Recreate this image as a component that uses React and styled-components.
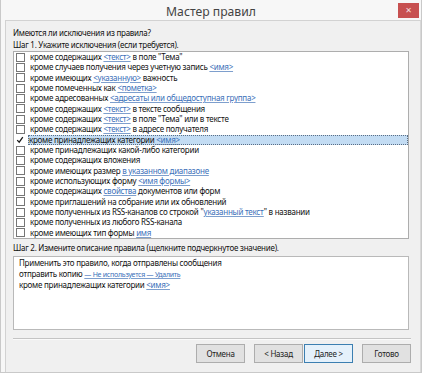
import React from 'react'
import styled, { createGlobalStyle } from 'styled-components'

const Global = createGlobalStyle`
    html, body {
        margin: 0;
        padding: 0;
        background: #ffffff;
    }
    body {
        font-family: "Noto Sans", "Open Sans", sans-serif;
    }
`

const conditions = [
    ['кроме содержащих ', { link: '<текст>' }, ' в поле "Тема"'],
    ['кроме случаев получения через учетную запись ', { link: '<имя>' }],
    ['кроме имеющих ', { link: '<указанную>' }, ' важность'],
    ['кроме помеченных как ', { link: '<пометка>' }],
    ['кроме адресованных ', { link: '<адресаты или общедоступная группа>' }],
    ['кроме содержащих ', { link: '<текст>' }, ' в тексте сообщения'],
    ['кроме содержащих ', { link: '<текст>' }, ' в поле "Тема" или в тексте'],
    ['кроме содержащих ', { link: '<текст>' }, ' в адресе получателя'],
    ['кроме принадлежащих категории ', { link: '<имя>' }],
    ['кроме принадлежащих какой-либо категории'],
    ['кроме содержащих вложения'],
    ['кроме имеющих размер ', { link: 'в указанном диапазоне' }],
    ['кроме использующих форму ', { link: '<имя формы>' }],
    ['кроме содержащих ', { link: 'свойства' }, ' документов или форм'],
    ['кроме приглашений на собрание или их обновлений'],
    ['кроме полученных из RSS-каналов со строкой "', { link: 'указанный текст' }, '" в названии'],
    ['кроме полученных из любого RSS-канала'],
    ['кроме имеющих тип формы ', { link: 'имя' }],
]

const SELECTED = 8

function Parts({ parts }) {
    return parts.map((p, i) =>
        typeof p === 'string' ? <span key={i}>{p}</span> : <Link key={i}>{p.link}</Link>
    )
}

export default function App() {
    return (
        <>
            <Global />
            <Window>
                <TitleBar>
                    <span />
                    <Title>Мастер правил</Title>
                    <CloseButton>✕</CloseButton>
                </TitleBar>
                <Body>
                    <Label>Имеются ли исключения из правила?</Label>
                    <Label>Шаг 1. Укажите исключения (если требуется).</Label>
                    <ListBox>
                        {conditions.map((parts, i) => (
                            <Row key={i}>
                                {i === SELECTED ? (
                                    <CheckMark viewBox="0 0 10 10">
                                        <path d="M1.5 5.2 L4 7.8 L8.5 1.5" fill="none" stroke="#1a1a1a" strokeWidth="1.6" />
                                    </CheckMark>
                                ) : (
                                    <CheckBox />
                                )}
                                <RowText $selected={i === SELECTED}>
                                    <Parts parts={parts} />
                                </RowText>
                            </Row>
                        ))}
                    </ListBox>
                    <Label $top={3}>Шаг 2. Измените описание правила (щелкните подчеркнутое значение).</Label>
                    <Description>
                        <DescLine>Применить это правило, когда отправлены сообщения</DescLine>
                        <DescLine>отправить копию <SmallLink>— Не используется — Удалить</SmallLink></DescLine>
                        <DescLine>кроме принадлежащих категории <Link>&lt;имя&gt;</Link></DescLine>
                    </Description>
                    <Separator />
                    <Buttons>
                        <Button>Отмена</Button>
                        <Pair>
                            <Button>&lt; Назад</Button>
                            <Button $focused>Далее &gt;</Button>
                        </Pair>
                        <Button>Готово</Button>
                    </Buttons>
                </Body>
            </Window>
        </>
    )
}

const Window = styled.div`
    width: 422px;
    height: 373px;
    box-sizing: border-box;
    border: 1px solid #c9c9c9;
    border-top: none;
    background: #f7f7f7;
    display: flex;
    flex-direction: column;
`

const TitleBar = styled.div`
    height: 20px;
    display: grid;
    grid-template-columns: 1fr auto 1fr;
    align-items: start;
`

const Title = styled.div`
    font-family: "Noto Sans", sans-serif;
    font-size: 12.2px;
    color: #444;
    line-height: 24px;
`

const CloseButton = styled.div`
    justify-self: end;
    margin: 3px 2px 0 0;
    width: 21px;
    height: 15px;
    background: #c75050;
    color: #f4dede;
    font-size: 8px;
    line-height: 15px;
    text-align: center;
    font-family: "DejaVu Sans", sans-serif;
`

const Body = styled.div`
    flex: 1;
    margin: 0 0 0 4px;
    border: 1px solid #d2d2d2;
    border-right-color: #d8d8d8;
    border-bottom: none;
    background: #f0f0f0;
    padding: 6px 11px 0 7px;
    display: flex;
    flex-direction: column;
    font-size: 8px;
    letter-spacing: -0.25px;
    color: #111;
`

const Label = styled.div`
    height: 12px;
    line-height: 12px;
    margin-top: ${p => p.$top || 0}px;
    white-space: nowrap;
`

const ListBox = styled.div`
    height: 188px;
    box-sizing: border-box;
    border: 1px solid #adadad;
    background: #ffffff;
    display: flex;
    flex-direction: column;
`

const Row = styled.div`
    height: 10.33px;
    display: flex;
    align-items: center;
    white-space: nowrap;
    line-height: 10px;
`

const CheckBox = styled.span`
    flex: none;
    width: 7px;
    height: 7px;
    margin: 0 4px 0 2px;
    border: 1px solid #767676;
    background: #fff;
`

const CheckMark = styled.svg`
    flex: none;
    width: 8px;
    height: 8px;
    margin: 0 4px 0 2px;
`

const RowText = styled.div`
    flex: 1;
    height: 10.33px;
    line-height: 10.33px;
    padding-left: 1px;
    box-sizing: border-box;
    ${p => p.$selected && `
        background: #c3dcf3;
        outline: 1px dotted #5a6e85;
        outline-offset: -1px;
    `}
`

const Link = styled.span`
    color: #3b70b9;
    text-decoration: underline;
    text-decoration-color: #7e9fcd;
`

const SmallLink = styled(Link)`
    font-size: 7px;
`

const Description = styled.div`
    margin-top: 2px;
    height: 74px;
    box-sizing: border-box;
    border: 1px solid #b9b9b9;
    background: #ffffff;
    padding: 0 5px;
    display: flex;
    flex-direction: column;
`

const DescLine = styled.div`
    height: 11px;
    line-height: 12px;
    white-space: nowrap;
`

const Separator = styled.div`
    margin: 8px -2px 0 0;
    height: 0;
    border-top: 1px solid #c4c4c4;
    border-bottom: 1px solid #fafafa;
`

const Buttons = styled.div`
    margin-top: 4px;
    display: flex;
    justify-content: flex-end;
    gap: 9px;
    margin-right: -2px;
`

const Pair = styled.div`
    display: flex;
    gap: 1px;
`

const Button = styled.div`
    width: 49px;
    height: 19px;
    box-sizing: border-box;
    border: 1px solid ${p => (p.$focused ? '#3c7fb1' : '#adadad')};
    background: ${p => (p.$focused ? '#e5f1fb' : '#e1e1e1')};
    display: flex;
    align-items: center;
    justify-content: center;
    font-size: 8px;
    color: #1e1e1e;
`
